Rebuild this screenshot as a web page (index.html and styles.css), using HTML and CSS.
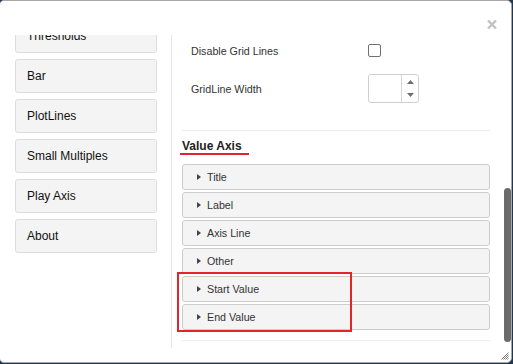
FILE: index.html
```html
<!DOCTYPE html>
<html>
<head>
<meta charset="utf-8">
<link rel="stylesheet" href="styles.css">
</head>
<body>
<div class="dialog">
  <div class="header">
    <span class="close" aria-label="Close">
      <svg width="10" height="9" viewBox="0 0 10 9"><path d="M1 0.5 L9 8.5 M9 0.5 L1 8.5" stroke="#c2c2c2" stroke-width="2.4" stroke-linecap="butt"/></svg>
    </span>
  </div>
  <div class="body">
    <div class="sidebar">
      <div class="menu">
        <div class="menu-item">Thresholds</div>
        <div class="menu-item">Bar</div>
        <div class="menu-item">PlotLines</div>
        <div class="menu-item">Small Multiples</div>
        <div class="menu-item">Play Axis</div>
        <div class="menu-item">About</div>
      </div>
    </div>
    <div class="main">
      <div class="form">
        <div class="row row-check">
          <span class="label">Disable Grid Lines</span>
          <span class="checkbox"></span>
        </div>
        <div class="row row-num">
          <span class="label">GridLine Width</span>
          <span class="number">
            <span class="num-field"></span>
            <span class="spinner">
              <svg width="7" height="4" viewBox="0 0 7 4"><path d="M0 4 L3.5 0 L7 4 Z" fill="#6e6e6e"/></svg>
              <svg width="7" height="4" viewBox="0 0 7 4"><path d="M0 0 L3.5 4 L7 0 Z" fill="#6e6e6e"/></svg>
            </span>
          </span>
        </div>
      </div>
      <div class="sep"></div>
      <div class="section-title"><span class="section-text">Value Axis</span></div>
      <div class="accordion">
        <div class="acc-item"><span class="caret"></span>Title</div>
        <div class="acc-item"><span class="caret"></span>Label</div>
        <div class="acc-item"><span class="caret"></span>Axis Line</div>
        <div class="acc-item"><span class="caret"></span>Other</div>
        <div class="highlight">
          <div class="acc-item"><span class="caret"></span>Start Value</div>
          <div class="acc-item"><span class="caret"></span>End Value</div>
        </div>
      </div>
      <div class="sep sep-bottom"></div>
    </div>
  </div>
  <div class="footer">
    <svg class="grip" width="8" height="8" viewBox="0 0 8 8"><path d="M7.5 0.5 L0.5 7.5 M7.5 2.5 L2.5 7.5 M7.5 4.5 L4.5 7.5 M7.5 6.5 L6.5 7.5" stroke="#7a7a7a" stroke-width="1"/></svg>
  </div>
  <div class="thumb"></div>
</div>
</body>
</html>
```
FILE: styles.css
```css
html, body {
  margin: 0;
  padding: 0;
}
body {
  background: #1f3850;
  width: 513px;
  height: 364px;
  overflow: hidden;
  font-family: "Liberation Sans", Arial, sans-serif;
}
.dialog {
  position: relative;
  margin-left: -1px;
  width: 511px;
  height: 361px;
  border: 1px solid #a8a8a8;
  border-radius: 5px;
  background: #fff;
  overflow: hidden;
  display: flex;
  flex-direction: column;
}
.header {
  height: 34px;
  flex: none;
  display: flex;
  justify-content: flex-end;
  align-items: flex-end;
  padding-right: 14px;
  padding-bottom: 6px;
  box-sizing: border-box;
}
.close {
  display: block;
  width: 10px;
  height: 9px;
}
.close svg { display: block; }
.body {
  height: 313px;
  flex: none;
  display: flex;
}
.sidebar {
  flex: none;
  border-right: 1px solid #e6e6e6;
  padding-left: 15px;
  padding-right: 14px;
  box-sizing: border-box;
  width: 172px;
  overflow: hidden;
}
.menu {
  margin-top: -16px;
  display: flex;
  flex-direction: column;
  gap: 6px;
}
.menu-item {
  height: 32px;
  line-height: 32px;
  border: 1px solid #dcdcdc;
  border-radius: 3px;
  background: #f4f4f4;
  padding-left: 11px;
  font-size: 12px;
  color: #111;
}
.main {
  flex: 1;
  padding-left: 10px;
  padding-right: 21px;
  overflow: hidden;
}
.form {
  padding-top: 9px;
  padding-left: 9px;
  display: flex;
  flex-direction: column;
  gap: 17px;
}
.row {
  display: grid;
  grid-template-columns: 177px auto;
  align-items: center;
}
.label {
  font-size: 10.7px;
  color: #333;
}
.checkbox {
  display: block;
  width: 11px;
  height: 11px;
  border: 1px solid #707070;
  border-radius: 2px;
  background: #fff;
}
.number {
  display: flex;
  width: 49px;
  height: 27px;
  border: 1px solid #cfcfcf;
  border-radius: 3px;
}
.num-field {
  flex: 1;
}
.spinner {
  width: 16px;
  border-left: 1px solid #d6d6d6;
  display: flex;
  flex-direction: column;
  align-items: center;
  justify-content: center;
  gap: 9px;
}
.spinner svg { display: block; }
.sep {
  height: 1px;
  background: #ececec;
  margin-top: 27px;
}
.section-title {
  margin-top: 8px;
  display: flex;
  align-items: flex-start;
}
.section-text {
  display: block;
  margin-left: -2px;
  padding: 0 7px 0 2px;
  height: 14px;
  line-height: 14px;
  font-size: 12px;
  font-weight: bold;
  color: #222;
  border-bottom: 2.5px solid #e3242b;
}
.accordion {
  margin-top: 8.5px;
  display: flex;
  flex-direction: column;
  gap: 2px;
}
.highlight {
  position: relative;
  display: flex;
  flex-direction: column;
  gap: 2px;
}
.highlight::after {
  content: "";
  position: absolute;
  left: -5px;
  top: -4px;
  width: 171px;
  height: 56px;
  border: 2.5px solid #e3242b;
  pointer-events: none;
}
.acc-item {
  height: 24px;
  border: 1px solid #cccccc;
  border-radius: 3px;
  background: #f4f4f4;
  display: flex;
  align-items: center;
  padding-left: 14px;
  font-size: 10.7px;
  color: #333;
  line-height: 22px;
}
.caret {
  width: 0;
  height: 0;
  border-left: 4px solid #444;
  border-top: 3px solid transparent;
  border-bottom: 3px solid transparent;
  margin-right: 6px;
}
.sep-bottom {
  margin-top: 10px;
}
.footer {
  flex: 1;
  position: relative;
}
.grip {
  position: absolute;
  right: 2px;
  bottom: 2px;
  display: block;
}
.thumb {
  position: absolute;
  left: 504px;
  top: 187px;
  width: 7px;
  height: 154px;
  border-radius: 4px;
  background: #6b6b6b;
}
```
